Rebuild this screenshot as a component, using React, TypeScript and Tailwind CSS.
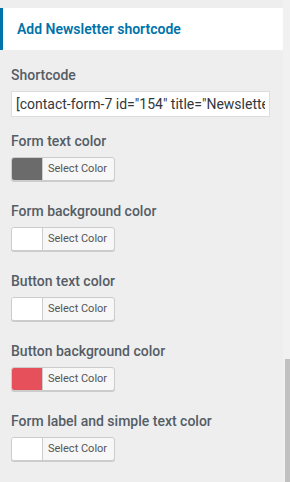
import React from "react";

const fields: { label: string; swatch: string }[] = [
  { label: "Form text color", swatch: "bg-[#6b6b6b]" },
  { label: "Form background color", swatch: "bg-white" },
  { label: "Button text color", swatch: "bg-white" },
  { label: "Button background color", swatch: "bg-[#e5505a]" },
  { label: "Form label and simple text color", swatch: "bg-white" },
];

function ColorButton({ swatch }: { swatch: string }) {
  return (
    <button
      type="button"
      className="flex h-[24px] w-[104px] overflow-hidden rounded-[3px] border border-[#cccccc] bg-[#f7f7f7] shadow-[0_1px_0_#cccccc] p-0"
    >
      <span className={`h-full w-[31px] border-r border-[#cccccc] ${swatch}`} />
      <span className="flex-1 pl-[5px] text-left text-[11px] leading-[22px] text-[#555555]">Select Color</span>
    </button>
  );
}

export default function App() {
  return (
    <div className="flex h-[482px] w-[290px] bg-[#eeeeee] font-['Roboto',sans-serif]">
      <div className="w-[283px] pt-[8px]">
        <div className="flex h-[42px] items-center border-l-[3px] border-[#0073aa] bg-white pl-[14px]">
          <span className="text-[14px] font-semibold text-[#0073aa]">Add Newsletter shortcode</span>
        </div>

        <div className="px-[11px]">
          <div className="mt-[15px] text-[14px] font-medium leading-[20px] text-[#555d66]">Shortcode</div>
          <input
            readOnly
            value={'[contact-form-7 id="154" title="Newsletter"]'}
            className="mt-[6px] h-[26px] w-[259px] border border-[#dddddd] bg-white px-[4px] text-[14px] text-[#32373c] outline-none"
          />

          {fields.map((f, i) => (
            <div key={f.label} className={i === 0 ? "mt-[14px]" : "mt-[20px]"}>
              <div className="text-[14px] font-medium leading-[20px] text-[#555d66]">{f.label}</div>
              <div className="mt-[6px]">
                <ColorButton swatch={f.swatch} />
              </div>
            </div>
          ))}
        </div>
      </div>

      <div className="flex w-[7px] flex-col bg-[#f1f1f1]">
        <div className="h-[359px]" />
        <div className="ml-[2px] flex-1 bg-[#c1c1c1]" />
      </div>
    </div>
  );
}
